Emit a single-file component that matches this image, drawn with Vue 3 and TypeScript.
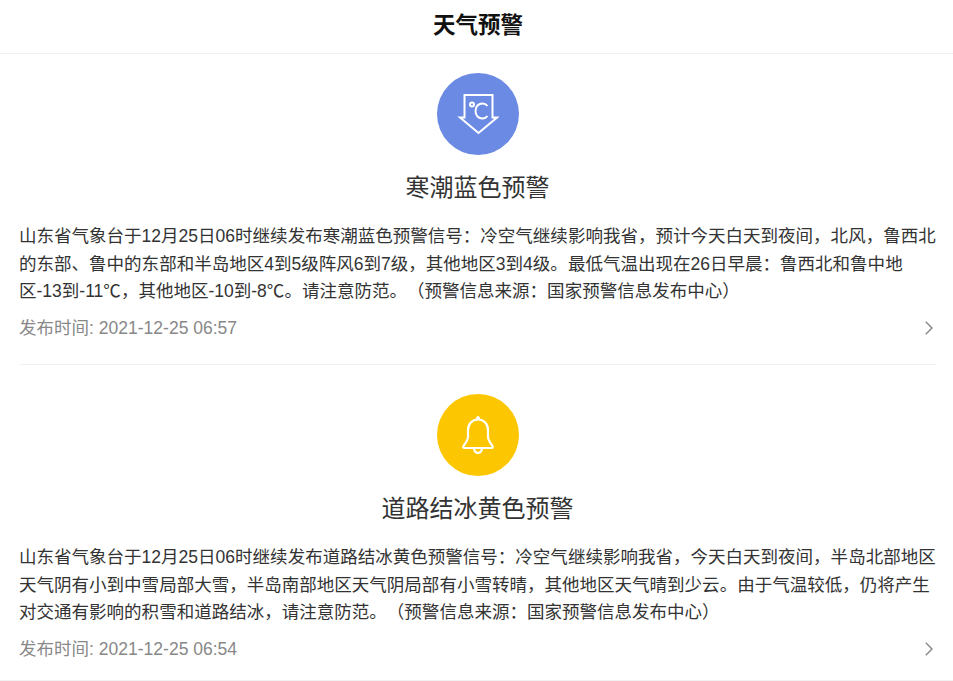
<script setup lang="ts">
interface Warning {
  kind: 'cold' | 'ice'
  title: string
  body: string
  time: string
}
const warnings: Warning[] = [
  {
    kind: 'cold',
    title: '寒潮蓝色预警',
    body: '山东省气象台于12月25日06时继续发布寒潮蓝色预警信号：冷空气继续影响我省，预计今天白天到夜间，北风，鲁西北的东部、鲁中的东部和半岛地区4到5级阵风6到7级，其他地区3到4级。最低气温出现在26日早晨：鲁西北和鲁中地区-13到-11℃，其他地区-10到-8℃。请注意防范。（预警信息来源：国家预警信息发布中心）',
    time: '2021-12-25 06:57',
  },
  {
    kind: 'ice',
    title: '道路结冰黄色预警',
    body: '山东省气象台于12月25日06时继续发布道路结冰黄色预警信号：冷空气继续影响我省，今天白天到夜间，半岛北部地区天气阴有小到中雪局部大雪，半岛南部地区天气阴局部有小雪转晴，其他地区天气晴到少云。由于气温较低，仍将产生对交通有影响的积雪和道路结冰，请注意防范。（预警信息来源：国家预警信息发布中心）',
    time: '2021-12-25 06:54',
  },
]
</script>

<template>
  <div class="page">
    <header class="bar">天气预警</header>
    <article v-for="w in warnings" :key="w.title" class="card">
      <div class="badge" :class="w.kind">
        <svg v-if="w.kind === 'cold'" width="42" height="42" viewBox="0 0 42 42" fill="none" stroke="#fff" stroke-width="2">
          <path d="M7.500 2H35.500V24.500H40L21.500 40L3 24.500H7.500Z" />
          <circle cx="15" cy="11.500" r="2" />
          <path d="M30.500 13C29 11 27 10.500 25.500 10.500C21.500 10.500 18.500 13.500 18.500 18C18.500 22.500 21.500 25.500 25.500 25.500C27 25.500 29 25 30.500 23" />
        </svg>
        <svg v-else width="38" height="42" viewBox="0 0 38 42" fill="none" stroke="#fff" stroke-width="2.200">
          <circle cx="19" cy="4" r="1.500" fill="#fff" stroke-width="1" />
          <path d="M19 5.500C13 5.500 9 10 9 16.500V23C9 26 6.500 29 4.500 32C3.800 33.300 4.200 34 5.500 34H32.500C33.800 34 34.200 33.300 33.500 32C31.500 29 29 26 29 23V16.500C29 10 25 5.500 19 5.500Z" stroke-linejoin="round" />
          <path d="M15 34.500C15.400 37.200 17 38.800 19 38.800C21 38.800 22.600 37.200 23 34.500" />
        </svg>
      </div>
      <h2 class="title">{{ w.title }}</h2>
      <p class="body">{{ w.body }}</p>
      <div class="meta">
        <span>发布时间: {{ w.time }}</span>
        <svg class="chev" width="8" height="14" viewBox="0 0 8 14" fill="none" stroke="#8a8a8a" stroke-width="1.500">
          <path d="M0.800 0.800L7 7L0.800 13.200" />
        </svg>
      </div>
    </article>
    <div class="foot"></div>
  </div>
</template>

<style>
html, body { background: #fff; overflow: hidden; height: 681px; }
</style>

<style scoped>
.page {
  width: 953px;
  font-family: "Liberation Sans", "Noto Sans CJK SC", sans-serif;
  color: #333;
  text-spacing-trim: space-all;
}
.bar {
  height: 53px;
  padding-left: 3px;
  line-height: 51px;
  text-align: center;
  font-size: 22.500px;
  font-weight: 700;
  color: #111;
  border-bottom: 1px solid #f1f1f1;
}
.card {
  margin: 0 17px 10px 19px;
  padding: 19px 0 0;
  height: 291px;
  border-bottom: 1px solid #f1f1f1;
}
.badge {
  width: 82px;
  height: 82px;
  border-radius: 50%;
  margin: 0 auto;
  display: flex;
  align-items: center;
  justify-content: center;
}
.cold { background: #6b8ae4; }
.ice { background: #fcc600; }
.title {
  margin: 14px 0 0;
  text-align: center;
  font-size: 24px;
  font-weight: 400;
  line-height: 37px;
  color: #333;
}
.body {
  margin: 17px 0 0;
  font-size: 17.520px;
  line-height: 27.600px;
  color: #333;
}
.meta {
  margin-top: 8px;
  display: flex;
  align-items: center;
  justify-content: space-between;
  font-size: 17.520px;
  line-height: 29px;
  color: #888;
}
.chev { margin-right: 3px; }
.foot {
  position: fixed;
  left: 0;
  right: 0;
  bottom: 0;
  height: 1px;
  background: #f1f1f1;
}
</style>
